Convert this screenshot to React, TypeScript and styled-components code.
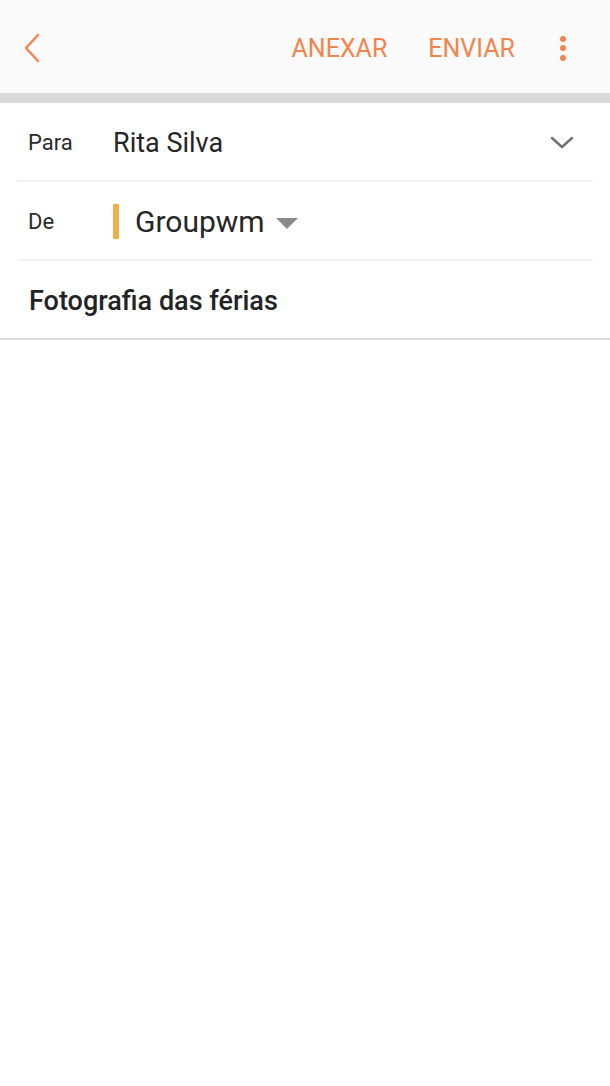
import React from "react";
import styled, { createGlobalStyle } from "styled-components";

const GlobalStyle = createGlobalStyle`
  html, body {
    margin: 0;
    padding: 0;
    background: #ffffff;
  }
  body {
    font-family: Roboto, "Noto Sans", Arial, sans-serif;
  }
`;

const ORANGE = "#f3844c";

const Screen = styled.div`
  width: 610px;
  min-height: 1086px;
  background: #ffffff;
  display: flex;
  flex-direction: column;
`;

const TopBar = styled.header`
  height: 103px;
  background: #fafafa;
  display: flex;
  align-items: center;
  padding: 3px 44px 0 20px;
  box-sizing: border-box;
  border-bottom: 10px solid #dadada;
`;

const BackButton = styled.button`
  background: none;
  border: 0;
  padding: 0;
  width: 24px;
  height: 30px;
  display: flex;
  align-items: center;
  justify-content: center;
  cursor: pointer;
`;

const Spacer = styled.div`
  flex: 1;
`;

const Action = styled.button`
  background: none;
  border: 0;
  padding: 0;
  margin-left: 41px;
  font-family: Roboto, Arial, sans-serif;
  font-size: 25px;
  font-weight: 400;
  color: ${ORANGE};
  cursor: pointer;
`;

const MoreButton = styled.button`
  background: none;
  border: 0;
  padding: 0;
  margin-left: 45px;
  display: flex;
  flex-direction: column;
  align-items: center;
  gap: 3.5px;
  cursor: pointer;
`;

const Dot = styled.span`
  width: 6px;
  height: 6px;
  border-radius: 50%;
  background: ${ORANGE};
`;

const Fields = styled.section`
  display: flex;
  flex-direction: column;
  padding: 0 17px;
`;

const FieldRow = styled.div`
  height: 79px;
  display: flex;
  align-items: center;
  padding: 2px 11px 0;
  box-sizing: border-box;
  border-bottom: 2px solid #f1f1f1;
`;

const Label = styled.span`
  width: 85px;
  font-size: 22px;
  color: #2b2b2b;
`;

const Value = styled.span<{ $size: number }>`
  flex: 1;
  display: flex;
  align-items: center;
  font-size: ${(p) => p.$size}px;
  color: #262626;
`;

const AccountMark = styled.span`
  width: 6px;
  height: 35px;
  border-radius: 1px;
  background: #f0b04c;
  margin-right: 16px;
`;

const Caret = styled.span`
  width: 0;
  height: 0;
  margin-left: 11px;
  margin-top: 3px;
  border-left: 11px solid transparent;
  border-right: 11px solid transparent;
  border-top: 11px solid #8a8a8a;
`;

const SubjectRow = styled.div`
  height: 79px;
  display: flex;
  align-items: center;
  padding: 2px 29px 0;
  box-sizing: border-box;
  border-bottom: 2px solid #dadada;
`;

const Subject = styled.span`
  font-size: 27px;
  font-weight: 500;
  color: #232323;
`;

const Body = styled.div`
  flex: 1;
  background: #ffffff;
`;

export default function App() {
  return (
    <Screen>
      <GlobalStyle />
      <TopBar>
        <BackButton aria-label="Voltar">
          <svg width="18" height="30" viewBox="0 0 18 30">
            <path
              d="M15 2 L3 15 L15 28"
              fill="none"
              stroke={ORANGE}
              strokeWidth="2.4"
              strokeLinecap="round"
              strokeLinejoin="round"
            />
          </svg>
        </BackButton>
        <Spacer />
        <Action>ANEXAR</Action>
        <Action>ENVIAR</Action>
        <MoreButton aria-label="Mais">
          <Dot />
          <Dot />
          <Dot />
        </MoreButton>
      </TopBar>
      <Fields>
        <FieldRow>
          <Label>Para</Label>
          <Value $size={27}>Rita Silva</Value>
          <svg width="24" height="14" viewBox="0 0 24 14" style={{ marginRight: 8 }}>
            <path
              d="M2 2 L12 11 L22 2"
              fill="none"
              stroke="#707070"
              strokeWidth="2.4"
              strokeLinecap="round"
              strokeLinejoin="round"
            />
          </svg>
        </FieldRow>
        <FieldRow>
          <Label>De</Label>
          <Value $size={30}>
            <AccountMark />
            Groupwm
            <Caret />
          </Value>
        </FieldRow>
      </Fields>
      <SubjectRow>
        <Subject>Fotografia das férias</Subject>
      </SubjectRow>
      <Body />
    </Screen>
  );
}
